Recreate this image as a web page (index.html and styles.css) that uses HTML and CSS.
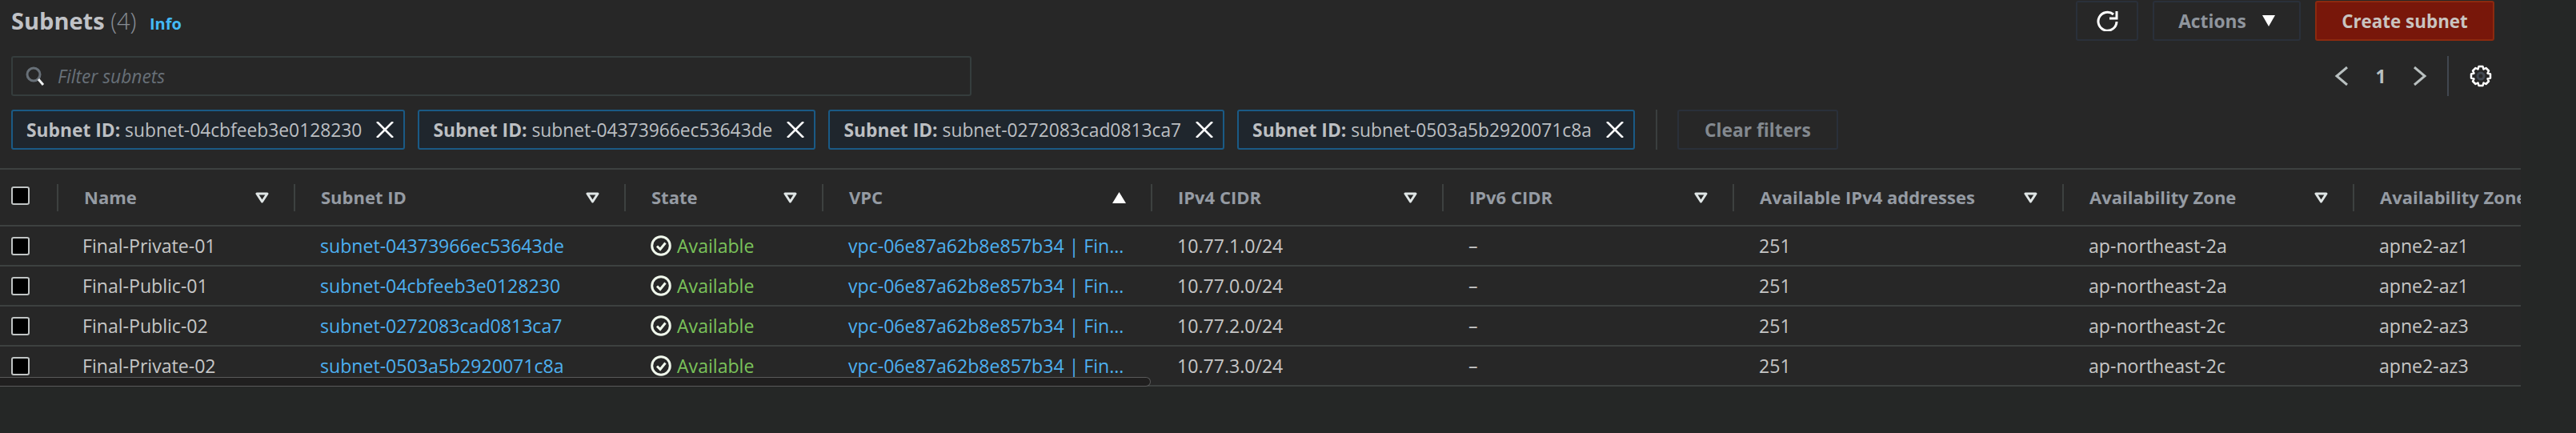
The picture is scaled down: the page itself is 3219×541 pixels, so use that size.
FILE: index.html
```html
<!DOCTYPE html>
<html lang="en">
<head>
  <meta charset="UTF-8" />
  <title>Subnets</title>
  <link rel="stylesheet" href="styles.css">
</head>
<body>
  <svg class="defs" width="0" height="0">
    <symbol id="caret" viewBox="0 0 17 14"><path d="M2 2h13L8.500 12z" fill="none" stroke="currentColor" stroke-width="3" stroke-linejoin="round"/></symbol>
    <symbol id="close" viewBox="0 0 22 20"><path d="M1 0l20 20M21 0L1 20" fill="none" stroke="currentColor" stroke-width="2.600"/></symbol>
    <symbol id="ok" viewBox="0 0 26 26"><circle cx="13" cy="13" r="11.300" fill="none" stroke="currentColor" stroke-width="3"/><path d="M8 13.500l4 4 6.500-8" fill="none" stroke="currentColor" stroke-width="3"/></symbol>
  </svg>

  <main class="panel">
    <header class="top">
      <h1>Subnets <span class="count">(4)</span> <a class="info">Info</a></h1>
      <div class="actions">
        <button class="btn btn-icon">
          <svg width="27" height="26" viewBox="0 0 27 26"><path d="M25 14a11.500 11.500 0 1 1-4-9" fill="none" stroke="currentColor" stroke-width="3"/><path d="M25 1v9h-9" fill="none" stroke="currentColor" stroke-width="3"/></svg>
        </button>
        <button class="btn btn-actions">Actions
          <svg width="16" height="14" viewBox="0 0 16 14"><path d="M0 0h16L8 14z" fill="currentColor"/></svg>
        </button>
        <button class="btn btn-primary">Create subnet</button>
      </div>
    </header>

    <div class="search-row">
      <div class="search">
        <svg width="24" height="24" viewBox="0 0 24 24"><circle cx="10" cy="10" r="8" fill="none" stroke="#687078" stroke-width="3"/><path d="M16 16l6 7" stroke="#eef0f0" stroke-width="3"/></svg>
        <span>Filter subnets</span>
      </div>
      <div class="pager">
        <svg width="20" height="24" viewBox="0 0 20 24"><path d="M17 1L4 12l13 11" fill="none" stroke="currentColor" stroke-width="3"/></svg>
        <span class="page-num">1</span>
        <svg width="20" height="24" viewBox="0 0 20 24"><path d="M3 1l13 11L3 23" fill="none" stroke="currentColor" stroke-width="3"/></svg>
        <div class="pager-sep"></div>
        <svg class="gear" width="28" height="28" viewBox="0 0 28 28"><path d="M11.500 2h5l1 3.500 3-1.500 3.500 3.500-1.500 3 3.500 1v5l-3.500 1 1.500 3-3.500 3.500-3-1.500-1 3.500h-5l-1-3.500-3 1.500L4 20.500l1.500-3-3.500-1v-5l3.500-1-1.500-3L7.500 4l3 1.500z" fill="none" stroke="#fff" stroke-width="2.500" stroke-linejoin="round"/><circle cx="14" cy="14" r="4" fill="none" stroke="#414750" stroke-width="3"/></svg>
      </div>
    </div>

    <div class="tokens">
      <div class="token"><span><b>Subnet ID:</b> subnet-04cbfeeb3e0128230</span><svg><use href="#close"/></svg></div>
      <div class="token"><span><b>Subnet ID:</b> subnet-04373966ec53643de</span><svg><use href="#close"/></svg></div>
      <div class="token"><span><b>Subnet ID:</b> subnet-0272083cad0813ca7</span><svg><use href="#close"/></svg></div>
      <div class="token"><span><b>Subnet ID:</b> subnet-0503a5b2920071c8a</span><svg><use href="#close"/></svg></div>
      <div class="token-sep"></div>
      <button class="btn btn-clear">Clear filters</button>
    </div>

    <div class="table-wrap">
      <table>
        <colgroup>
          <col class="c-check"><col class="c-name"><col class="c-id"><col class="c-state"><col class="c-vpc">
          <col class="c-ip4"><col class="c-ip6"><col class="c-avail"><col class="c-az"><col class="c-azid">
        </colgroup>
        <thead>
          <tr>
            <th><span class="box box-head"></span></th>
            <th><div class="th"><span>Name</span><svg class="caret"><use href="#caret"/></svg></div></th>
            <th><div class="th"><span>Subnet ID</span><svg class="caret"><use href="#caret"/></svg></div></th>
            <th><div class="th"><span>State</span><svg class="caret"><use href="#caret"/></svg></div></th>
            <th><div class="th"><span>VPC</span><svg class="caret" viewBox="0 0 17 14"><path d="M8.500 0L17 14H0z" fill="#fff"/></svg></div></th>
            <th><div class="th"><span>IPv4 CIDR</span><svg class="caret"><use href="#caret"/></svg></div></th>
            <th><div class="th"><span>IPv6 CIDR</span><svg class="caret"><use href="#caret"/></svg></div></th>
            <th><div class="th"><span>Available IPv4 addresses</span><svg class="caret"><use href="#caret"/></svg></div></th>
            <th><div class="th"><span>Availability Zone</span><svg class="caret"><use href="#caret"/></svg></div></th>
            <th><div class="th"><span>Availability Zone ID</span></div></th>
          </tr>
        </thead>
        <tbody>
          <tr>
            <td><span class="box"></span></td>
            <td>Final-Private-01</td>
            <td><a>subnet-04373966ec53643de</a></td>
            <td><div class="state"><svg><use href="#ok"/></svg><span>Available</span></div></td>
            <td><a>vpc-06e87a62b8e857b34 | Fin...</a></td>
            <td>10.77.1.0/24</td>
            <td>–</td>
            <td>251</td>
            <td>ap-northeast-2a</td>
            <td>apne2-az1</td>
          </tr>
          <tr>
            <td><span class="box"></span></td>
            <td>Final-Public-01</td>
            <td><a>subnet-04cbfeeb3e0128230</a></td>
            <td><div class="state"><svg><use href="#ok"/></svg><span>Available</span></div></td>
            <td><a>vpc-06e87a62b8e857b34 | Fin...</a></td>
            <td>10.77.0.0/24</td>
            <td>–</td>
            <td>251</td>
            <td>ap-northeast-2a</td>
            <td>apne2-az1</td>
          </tr>
          <tr>
            <td><span class="box"></span></td>
            <td>Final-Public-02</td>
            <td><a>subnet-0272083cad0813ca7</a></td>
            <td><div class="state"><svg><use href="#ok"/></svg><span>Available</span></div></td>
            <td><a>vpc-06e87a62b8e857b34 | Fin...</a></td>
            <td>10.77.2.0/24</td>
            <td>–</td>
            <td>251</td>
            <td>ap-northeast-2c</td>
            <td>apne2-az3</td>
          </tr>
          <tr>
            <td><span class="box"></span></td>
            <td>Final-Private-02</td>
            <td><a>subnet-0503a5b2920071c8a</a></td>
            <td><div class="state"><svg><use href="#ok"/></svg><span>Available</span></div></td>
            <td><a>vpc-06e87a62b8e857b34 | Fin...</a></td>
            <td>10.77.3.0/24</td>
            <td>–</td>
            <td>251</td>
            <td>ap-northeast-2c</td>
            <td>apne2-az3</td>
          </tr>
        </tbody>
      </table>
      <div class="scrollbar"></div>
    </div>
  </main>
</body>
</html>
```

FILE: styles.css
```css
html, body {
  margin: 0;
  height: 541px;
  overflow: hidden;
}

body {
  font-family: "Open Sans", "Noto Sans", sans-serif;
  font-size: 22.8px;
  color: #c6c6c6;
  background: #252726;
}

.defs {
  display: block;
  height: 0;
}

.panel {
  width: 3150px;
  height: 541px;
  background: linear-gradient(#272727 483px, #252726 483px);
}

/* top row */
.top {
  display: flex;
  justify-content: space-between;
  padding: 1px 33px 0 14px;
}

h1 {
  margin: 0;
  height: 50px;
  font-size: 29px;
  line-height: 50px;
  font-weight: 700;
  color: #c0c2c6;
}

.count {
  font-weight: 300;
  color: #878d95;
}

.info {
  margin-left: 9px;
  font-size: 20px;
  font-weight: 700;
  color: #44b9f6;
}

.actions {
  display: flex;
  gap: 18px;
}

.btn {
  box-sizing: border-box;
  height: 50px;
  display: flex;
  align-items: center;
  justify-content: center;
  font-family: inherit;
  font-size: 22.8px;
  font-weight: 700;
  border-radius: 3px;
  border: 2px solid #2a303a;
  background: #272727;
  color: #8f959d;
}

.btn-icon {
  width: 78px;
  color: #fff;
}

.btn-actions {
  width: 185px;
  gap: 20px;
}

.btn-actions svg {
  color: #fff;
}

.btn-primary {
  width: 224px;
  font-size: 22.4px;
  background: #78170a;
  border-color: #8c2a0f;
  color: #c9c4c0;
}

/* search + pager */
.search-row {
  display: flex;
  justify-content: space-between;
  margin-top: 19px;
  padding: 0 36px 0 14px;
}

.search {
  box-sizing: border-box;
  width: 1200px;
  height: 50px;
  display: flex;
  align-items: center;
  gap: 16px;
  padding-left: 16px;
  border: 2px solid #353d3d;
  border-radius: 3px;
  font-style: italic;
  color: #687078;
}

.pager {
  display: flex;
  align-items: center;
  color: #b9c0c0;
}

.page-num {
  width: 78px;
  text-align: center;
  font-weight: 700;
}

.pager-sep {
  width: 2px;
  height: 50px;
  margin: 0 26px 0 24px;
  background: #414750;
}

/* filter tokens */
.tokens {
  display: flex;
  align-items: center;
  margin-top: 17px;
  padding-left: 14px;
  gap: 16px;
}

.token {
  box-sizing: border-box;
  height: 50px;
  display: flex;
  align-items: center;
  gap: 18px;
  padding: 0 12px 0 17px;
  border: 2px solid #1a5a85;
  border-radius: 3px;
  background: #1f262d;
  color: #bcbfc2;
}

.token svg {
  width: 22px;
  height: 20px;
  color: #fff;
}

.token-sep {
  width: 2px;
  height: 50px;
  margin-left: 10px;
  background: #3a3f3f;
}

.btn-clear {
  width: 201px;
  margin-left: 9px;
  color: #83898f;
}

/* table */
.table-wrap {
  position: relative;
  width: 3150px;
  margin-top: 23px;
  overflow: hidden;
  border-top: 2px solid #3d4140;
}

table {
  width: 3300px;
  table-layout: fixed;
  border-collapse: separate;
  border-spacing: 0;
}

.c-check { width: 71px; }
.c-name { width: 296px; }
.c-id { width: 413px; }
.c-state { width: 247px; }
.c-vpc { width: 411px; }
.c-ip4 { width: 364px; }
.c-ip6 { width: 363px; }
.c-avail { width: 412px; }
.c-az { width: 363px; }
.c-azid { width: 360px; }

th {
  height: 69px;
  padding: 0;
  text-align: left;
  font-size: 22px;
  font-weight: 700;
  color: #959ba3;
  border-bottom: 2px solid #3d4140;
}

.th {
  box-sizing: border-box;
  height: 34px;
  display: flex;
  align-items: center;
  justify-content: space-between;
  padding: 0 31px 0 32px;
  border-left: 2px solid #3d4140;
  white-space: nowrap;
}

.th span {
  padding-bottom: 2px;
}

.caret {
  width: 17px;
  height: 14px;
  color: #dfe5e5;
  flex: none;
}

td {
  height: 48px;
  padding: 0 0 0 33px;
  font-size: 23.1px;
  white-space: nowrap;
  border-bottom: 2px solid #3d4140;
}

td:nth-child(2) {
  padding-left: 32px;
}

th:first-child, td:first-child {
  padding-left: 14px;
}

.box {
  box-sizing: border-box;
  display: block;
  width: 23px;
  height: 23px;
  background: #000;
  border: 2px solid #c0c4c4;
  border-radius: 3px;
}

.box-head {
  margin-bottom: 4px;
}

a {
  color: #4db0f0;
}

.state {
  display: flex;
  align-items: center;
  gap: 7px;
  color: #7ac25a;
}

.state svg {
  width: 26px;
  height: 26px;
  color: #f0f8ec;
  flex: none;
}

/* overlay scrollbar */
.scrollbar {
  position: absolute;
  left: 0;
  bottom: 0;
  box-sizing: border-box;
  width: 1438px;
  height: 12px;
  background: #201f1f;
  border: 1px solid #5a5a5a;
  border-left: 0;
  border-radius: 0 6px 6px 0;
}
```
